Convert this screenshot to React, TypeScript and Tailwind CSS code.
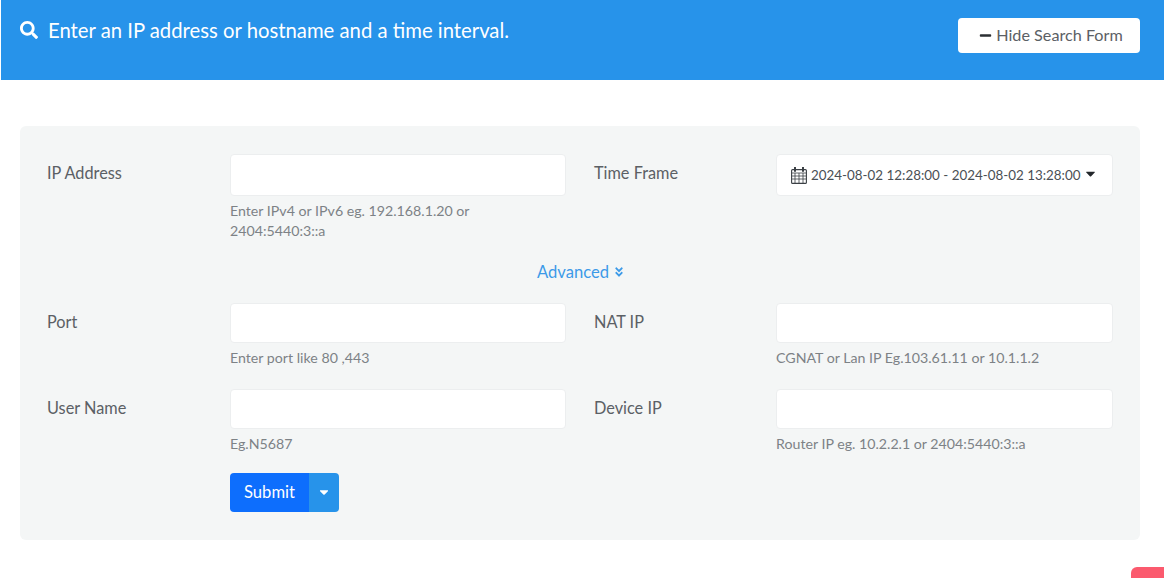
import { FaAngleDoubleDown, FaCaretDown, FaMinus, FaSearch } from 'react-icons/fa'

function CalendarIcon() {
  return (
    <svg viewBox="0 0 16 17" className="h-[17px] w-[16px] shrink-0 text-[#3a3f44]" fill="none" stroke="currentColor">
      <rect x="0.6" y="2.6" width="14.8" height="13.8" rx="1" strokeWidth="1.1" />
      <path d="M1 6h14M1 9h14M1 12h14M4 6v10M8 6v10M12 6v10" strokeWidth="0.8" />
      <path d="M4 0.5v3.5M12 0.5v3.5" strokeWidth="2" strokeLinecap="round" />
    </svg>
  )
}

function Label({ children, right }: { children: string; right?: boolean }) {
  return (
    <label className={`block pt-[9px] text-[16.3px] leading-[20px] text-[#5b6065] ${right ? 'pl-[28px]' : ''}`}>
      {children}
    </label>
  )
}

function Hint({ children }: { children: React.ReactNode }) {
  return <p className="mt-[5px] text-[14.2px] leading-[20px] text-[#7d8286]">{children}</p>
}

function Field({ hint, height = 'h-[40px]' }: { hint: React.ReactNode; height?: string }) {
  return (
    <div>
      <input className={`${height} block w-full rounded-[4px] border border-[#eceeef] bg-white`} />
      <Hint>{hint}</Hint>
    </div>
  )
}

export default function App() {
  return (
    <div className="relative h-[578px] w-[1164px] overflow-hidden bg-white font-['Lato','Liberation_Sans',sans-serif]">
      <header className="ml-px flex h-[80px] items-start justify-between bg-[#2793ea] pr-[24px]">
        <h1 className="ml-[19px] mt-[18px] flex items-center gap-[10px] text-[20.3px] leading-[24px] text-white">
          <FaSearch className="h-[18px] w-[18px]" />
          Enter an IP address or hostname and a time interval.
        </h1>
        <button className="mt-[18px] flex h-[35px] w-[182px] items-center justify-center gap-[4px] rounded-[4px] bg-white pl-[4px] text-[16.2px] text-[#5b6065]">
          <FaMinus className="h-[13px] w-[13px] text-[#2b2f33]" />
          Hide Search Form
        </button>
      </header>

      <main className="ml-[20px] mt-[46px] h-[414px] w-[1120px] rounded-[6px] bg-[#f4f6f6] pl-[27px] pt-[28px]">
        <div className="grid grid-cols-[183px_336px_210px_337px]">
          <Label>IP Address</Label>
          <Field
            height="h-[42px]"
            hint={
              <>
                Enter IPv4 or IPv6 eg. 192.168.1.20 or
                <br />
                2404:5440:3::a
              </>
            }
          />
          <Label right>Time Frame</Label>
          <button className="flex h-[42px] items-center gap-[4px] rounded-[4px] border border-[#eceeef] bg-white pl-[14px] text-[13.4px] text-[#4a4f54]">
            <CalendarIcon />
            2024-08-02 12:28:00 - 2024-08-02 13:28:00
            <FaCaretDown className="-mt-[4px] h-[15px] w-[13px] text-[#23272b]" />
          </button>
        </div>

        <div className="mt-[21px] flex h-[20px] items-center justify-center gap-[5px] pr-[26px] text-[16.6px] text-[#3c9ae8]">
          Advanced
          <FaAngleDoubleDown className="h-[12px] w-[10px]" />
        </div>

        <div className="mt-[21px] grid grid-cols-[183px_336px_210px_337px] gap-y-[21px]">
          <Label>Port</Label>
          <Field hint="Enter port like 80 ,443" />
          <Label right>NAT IP</Label>
          <Field hint="CGNAT or Lan IP Eg.103.61.11 or 10.1.1.2" />

          <Label>User Name</Label>
          <Field hint="Eg.N5687" />
          <Label right>Device IP</Label>
          <Field hint="Router IP eg. 10.2.2.1 or 2404:5440:3::a" />
        </div>

        <div className="ml-[183px] mt-[19px] flex h-[39px] w-[109px] overflow-hidden rounded-[4px] text-white">
          <button className="w-[79px] bg-[#0d6efd] text-[16.6px]">Submit</button>
          <button className="flex flex-1 items-center justify-center bg-[#2793ea]">
            <FaCaretDown className="-mt-[2px] h-[14px] w-[12px]" />
          </button>
        </div>
      </main>

      <div className="absolute bottom-0 left-[1131px] h-[11px] w-[40px] rounded-t-[6px] bg-[#fb5a6e]" />
    </div>
  )
}
